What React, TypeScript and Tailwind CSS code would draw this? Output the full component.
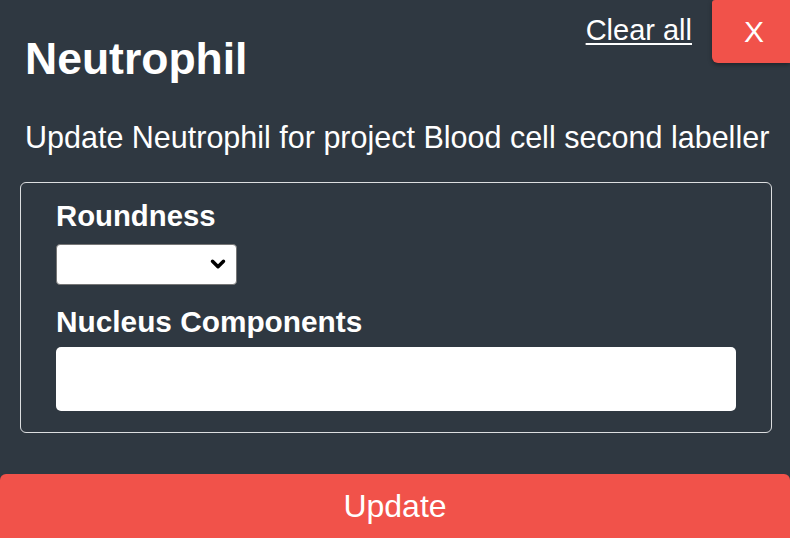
import { ChevronDown } from 'lucide-react';

export default function App() {
  return (
    <div className="w-[790px] h-[538px] overflow-hidden bg-[#2f3841] text-white font-['Liberation_Sans',Arial,sans-serif] flex flex-col">
      {/* Header */}
      <div className="flex items-start justify-between">
        <h1 className="pl-[25px] pt-[33px] text-[44.5px] leading-[1.15] font-bold">Neutrophil</h1>
        <div className="flex items-start gap-[20px]">
          <button className="mt-[14px] text-[29px] leading-[1.15] underline underline-offset-[3px] decoration-[2px]">
            Clear all
          </button>
          <button className="w-[78px] h-[63px] pl-[6px] bg-[#f1524a] rounded-bl-[6px] rounded-tl-[3px] shadow-[0_2px_4px_rgba(0,0,0,0.35)] text-[30px] leading-none">
            X
          </button>
        </div>
      </div>

      <p className="pl-[25px] mt-[36px] text-[30.5px] leading-[1.15]">
        Update Neutrophil for project Blood cell second labeller
      </p>

      {/* Fields */}
      <div className="ml-[20px] mr-[18px] mt-[27px] h-[251px] border-[1.5px] border-[#dcdee0] rounded-[6px] pl-[35px] pr-[35px] pt-[16px] flex flex-col">
        <label className="text-[29.3px] leading-[1.15] font-bold">Roundness</label>
        <div className="mt-[11px] w-[181px] h-[41px] bg-white border-[1.5px] border-[#767676] rounded-[4px] flex items-center justify-end pr-[7px]">
          <ChevronDown size={22} strokeWidth={3.8} className="text-black" />
        </div>
        <label className="mt-[20px] text-[29.8px] leading-[1.15] font-bold">Nucleus Components</label>
        <div className="mt-[8px] h-[64px] bg-white rounded-[5px]" />
      </div>

      <button className="mt-[41px] h-[64px] w-full bg-[#f1524a] rounded-t-[6px] text-[32px] leading-none">
        Update
      </button>
    </div>
  );
}
